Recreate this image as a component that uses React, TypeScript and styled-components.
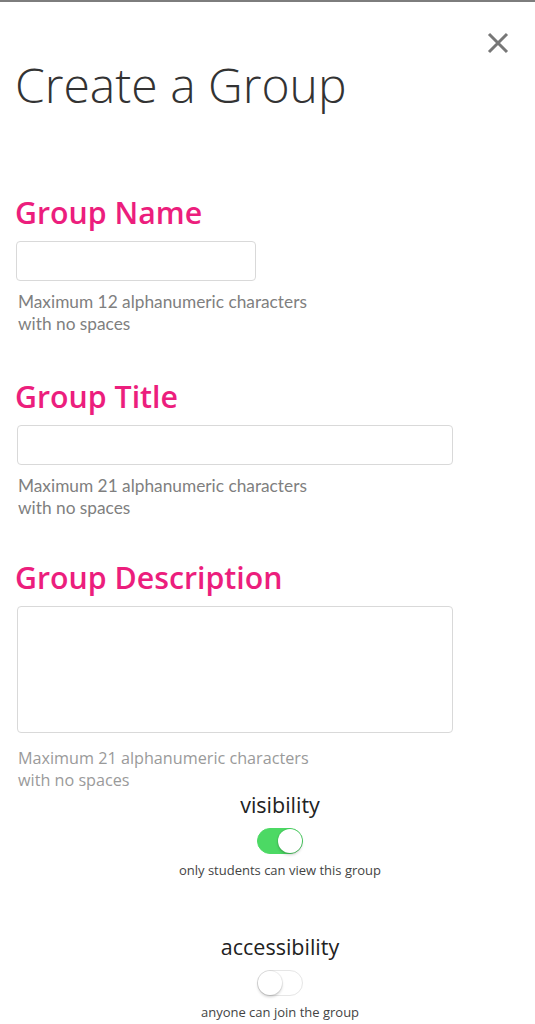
import React from "react";
import styled, { createGlobalStyle } from "styled-components";

const Global = createGlobalStyle`
  html, body { margin: 0; padding: 0; background: #fff; }
  body { font-family: "Open Sans", "Noto Sans", sans-serif; }
  * { box-sizing: border-box; }
`;

const Page = styled.div`
  border-top: 2px solid #7d7d7d;
  width: 535px;
  min-height: 1024px;
  background: #fff;
  padding: 0 0 0 16px;
`;

const Header = styled.div`
  display: flex;
  flex-direction: column;
`;

const CloseRow = styled.div`
  display: flex;
  justify-content: flex-end;
  padding: 30px 26px 0 0;
  height: 53px;
`;

const CloseButton = styled.button`
  border: none;
  background: none;
  padding: 0;
  width: 22px;
  height: 22px;
  display: flex;
  align-items: center;
  justify-content: center;
  cursor: pointer;
`;

const Title = styled.h1`
  margin: 0;
  font-family: "Open Sans", sans-serif;
  font-weight: 300;
  font-size: 48px;
  line-height: 60px;
  color: #333;
  margin-left: -1px;
`;

const Form = styled.div`
  display: flex;
  flex-direction: column;
  margin-top: 80px;
`;

const Field = styled.div<{ $mb: number }>`
  display: flex;
  flex-direction: column;
  margin-bottom: ${(p) => p.$mb}px;
`;

const Label = styled.label`
  font-family: "Open Sans", sans-serif;
  font-weight: 600;
  font-size: 30.3px;
  line-height: 36px;
  color: #ec1e7d;
  margin-bottom: 10px;
  margin-left: -1px;
`;

const Input = styled.input<{ $w: number; $ml?: number }>`
  width: ${(p) => p.$w}px;
  height: 40px;
  border: 1px solid #d9d9d9;
  border-radius: 4px;
  background: #fff;
  margin: 0 0 0 ${(p) => p.$ml ?? 0}px;
`;

const TextArea = styled.textarea`
  width: 436px;
  height: 127px;
  border: 1px solid #d9d9d9;
  border-radius: 4px;
  background: #fff;
  resize: none;
  margin: 0 0 0 1px;
  display: block;
`;

const Help = styled.p<{ $alt?: boolean }>`
  margin: ${(p) => (p.$alt ? "14px 0 0 2px" : "10px 0 0 2px")};
  font-family: ${(p) => (p.$alt ? '"Open Sans", sans-serif' : 'Lato, "Noto Sans", sans-serif')};
  font-size: ${(p) => (p.$alt ? "16.2px" : "17.3px")};
  line-height: 22px;
  color: ${(p) => (p.$alt ? "#9a9a9a" : "#7f7f7f")};
`;

const Setting = styled.div<{ $mt: number }>`
  display: flex;
  flex-direction: column;
  align-items: center;
  margin-top: ${(p) => p.$mt}px;
  width: 528px;
`;

const SettingTitle = styled.div`
  font-family: "Open Sans", sans-serif;
  font-size: 21.5px;
  line-height: 28px;
  color: #222;
`;

const Toggle = styled.div<{ $on: boolean }>`
  margin-top: 9px;
  width: 46px;
  height: 26px;
  border-radius: 13px;
  background: ${(p) => (p.$on ? "#4cd964" : "#fff")};
  border: 1px solid ${(p) => (p.$on ? "#4cd964" : "#e6e6e6")};
  position: relative;
`;

const Knob = styled.div<{ $on: boolean }>`
  position: absolute;
  top: 0;
  left: ${(p) => (p.$on ? "20px" : "0")};
  width: 24px;
  height: 24px;
  border-radius: 50%;
  background: #fff;
  box-shadow: 0 2px 3px rgba(0, 0, 0, 0.18), 0 0 0 1px rgba(0, 0, 0, 0.06);
`;

const Caption = styled.div`
  margin-top: 8px;
  font-family: "Open Sans", sans-serif;
  font-size: 13px;
  line-height: 17px;
  color: #444;
`;

export default function App() {
  return (
    <>
      <Global />
      <Page>
        <Header>
          <CloseRow>
            <CloseButton aria-label="close">
              <svg width="22" height="22" viewBox="0 0 22 22">
                <path d="M2 2 L20 20 M20 2 L2 20" stroke="#777" strokeWidth="3" />
              </svg>
            </CloseButton>
          </CloseRow>
          <Title>Create a Group</Title>
        </Header>
        <Form>
          <Field $mb={44}>
            <Label>Group Name</Label>
            <Input $w={240} />
            <Help>
              Maximum 12 alphanumeric characters
              <br />
              with no spaces
            </Help>
          </Field>
          <Field $mb={41}>
            <Label>Group Title</Label>
            <Input $w={436} $ml={1} />
            <Help>
              Maximum 21 alphanumeric characters
              <br />
              with no spaces
            </Help>
          </Field>
          <Field $mb={0}>
            <Label>Group Description</Label>
            <TextArea />
            <Help $alt>
              Maximum 21 alphanumeric characters
              <br />
              with no spaces
            </Help>
          </Field>
          <Setting $mt={0}>
            <SettingTitle>visibility</SettingTitle>
            <Toggle $on>
              <Knob $on />
            </Toggle>
            <Caption>only students can view this group</Caption>
          </Setting>
          <Setting $mt={54}>
            <SettingTitle>accessibility</SettingTitle>
            <Toggle $on={false}>
              <Knob $on={false} />
            </Toggle>
            <Caption>anyone can join the group</Caption>
          </Setting>
        </Form>
      </Page>
    </>
  );
}
